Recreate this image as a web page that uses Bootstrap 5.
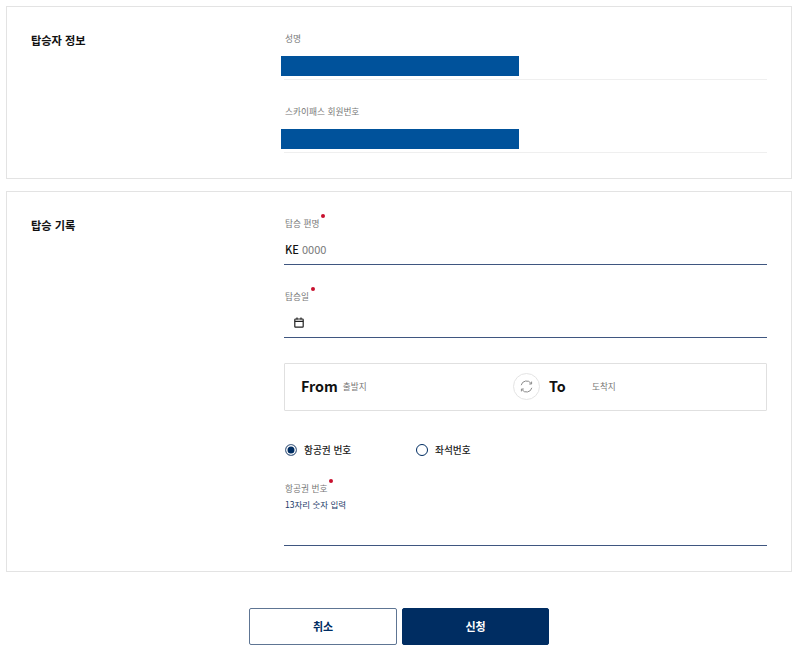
<!DOCTYPE html>
<html lang="ko">
<head>
<meta charset="utf-8">
<title>탑승 기록</title>
<link rel="stylesheet" href="https://cdn.jsdelivr.net/npm/bootstrap@5.3.0/dist/css/bootstrap.min.css">
<style>
html,body{height:651px;overflow:hidden}
body{font-family:"Noto Sans CJK KR","Noto Sans",sans-serif;background:#fff;padding:6px 8px 0 6px;color:#111}
.panel-box{border:1px solid #e3e3e3;display:flex}
.panel-one{height:173px;margin-bottom:12px}
.panel-two{height:381px}
.panel-side{width:277px;padding:24px 0 0 24px;font-size:11.2px;font-weight:700;line-height:18px;color:#111;flex:none}
.panel-main{width:483px;flex:none;padding-top:25px}
.field-cap{display:block;width:fit-content;font-size:8.7px;line-height:13px;color:#777;position:relative;margin-left:1px}
.req-dot{position:absolute;top:-3px;right:-6px;width:4px;height:4px;border-radius:50%;background:#c8102e}
.mask-row{border-bottom:1px solid #efefef;height:24px;margin-top:11px}
.mask-row + .field-cap{margin-top:25px}
.mask-bar{display:block;width:238px;height:20px;margin-left:-3px;background:#00529b}
.entry-line{border-bottom:1px solid #3f5680;height:35px;font-size:11px;line-height:18px;padding:10px 0 0 1px;margin-bottom:25px}
.entry-key{color:#111;font-weight:500}
.entry-hint{color:#777}
.entry-line.cal-wrap{padding:14px 0 0 10px;margin-bottom:0}
.cal-wrap svg{display:block}
.route-box{border:1px solid #e0e0e0;border-radius:1px;height:48px;margin-top:25px;padding:0 0 2px 16px}
.route-word{font-size:14.3px;font-weight:700;color:#111;line-height:20px}
.route-hint{font-size:8.6px;color:#777;line-height:20px}
.route-from{width:212px;flex:none;gap:5px}
.route-swap{width:27px;height:27px;border:1px solid #e4e4e4;border-radius:50%;flex:none}
.route-to{margin-left:9px;width:43px;flex:none}
.choice-row{margin-top:29px;height:20px;font-size:9.7px;line-height:20px;color:#222;padding-left:1px}
.choice-item{display:flex;align-items:center;gap:7px;font-weight:500}
.choice-first{width:131px}
.choice-mark{width:12px;height:12px;border:1px solid #002d62;border-radius:50%;flex:none;background:#fff}
.choice-on{background:#002d62;box-shadow:inset 0 0 0 1.5px #fff;border-color:#5e7593}
.ticket-block{margin-top:22px}
.ticket-hint{font-size:8.5px;line-height:13px;color:#1c3b69;margin:3px 0 0 1px}
.ticket-line{border-bottom:1px solid #3f5680;height:35px}
.action-row{margin-top:36px;gap:5px}
.act-btn{width:148px;height:37px;border-radius:2px;font-size:11px;font-weight:700;padding:0;line-height:35px}
.act-ghost{background:#fff;color:#002d62;border:1px solid #5e7593}
.act-fill{width:147px;background:#002d62;color:#fff;border:1px solid #002d62}
</style>
</head>
<body>
<section class="panel-box panel-one">
  <div class="panel-side">탑승자 정보</div>
  <div class="panel-main">
    <div class="field-cap">성명</div>
    <div class="mask-row"><span class="mask-bar"></span></div>
    <div class="field-cap">스카이패스 회원번호</div>
    <div class="mask-row"><span class="mask-bar"></span></div>
  </div>
</section>
<section class="panel-box panel-two">
  <div class="panel-side">탑승 기록</div>
  <div class="panel-main">
    <div class="field-cap">탑승 편명<span class="req-dot"></span></div>
    <div class="entry-line"><span class="entry-key">KE</span> <span class="entry-hint">0000</span></div>
    <div class="field-cap">탑승일<span class="req-dot"></span></div>
    <div class="entry-line cal-wrap">
      <svg width="10" height="11" viewBox="0 0 10 11" fill="none" stroke="#222" stroke-width="1.2"><rect x="0.8" y="2" width="8.4" height="8.2" rx="0.8"/><path d="M0.8 4.3H9.2M3 0.4V2.4M7 0.4V2.4"/></svg>
    </div>
    <div class="route-box d-flex align-items-center">
      <div class="route-from d-flex align-items-center"><span class="route-word">From</span><span class="route-hint">출발지</span></div>
      <div class="route-swap d-flex align-items-center justify-content-center">
        <svg width="15" height="15" viewBox="0 0 15 15" fill="none" stroke="#8a8a8a" stroke-width="1"><path d="M2.2 6.2A5.4 5.4 0 0 1 12 4.4"/><path d="M12.8 8.8A5.4 5.4 0 0 1 3 10.6"/><path d="M12.6 2.6V5H10.2"/><path d="M2.4 12.4V10H4.8"/></svg>
      </div>
      <span class="route-word route-to">To</span>
      <span class="route-hint">도착지</span>
    </div>
    <div class="choice-row d-flex align-items-center">
      <div class="choice-item choice-first"><span class="choice-mark choice-on"></span>항공권 번호</div>
      <div class="choice-item"><span class="choice-mark"></span>좌석번호</div>
    </div>
    <div class="ticket-block">
      <div class="field-cap">항공권 번호<span class="req-dot"></span></div>
      <div class="ticket-hint">13자리 숫자 입력</div>
      <div class="ticket-line"></div>
    </div>
  </div>
</section>
<div class="action-row d-flex justify-content-center">
  <button type="button" class="btn act-btn act-ghost">취소</button>
  <button type="button" class="btn act-btn act-fill">신청</button>
</div>
</body>
</html>
